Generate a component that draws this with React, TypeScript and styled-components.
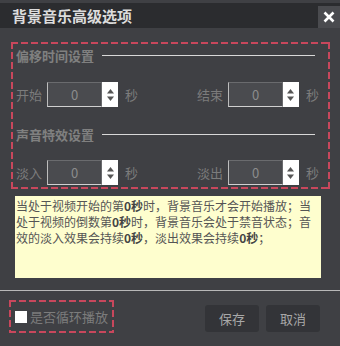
import React from 'react';
import styled, { createGlobalStyle } from 'styled-components';

const GlobalStyle = createGlobalStyle`
  html, body {
    margin: 0;
    padding: 0;
    background: #3f4044;
  }
  body {
    font-family: "Noto Sans CJK SC", "Noto Sans", sans-serif;
  }
`;

const Window = styled.div`
  width: 340px;
  height: 346px;
  background: #3f4044;
  display: flex;
  flex-direction: column;
  box-sizing: border-box;
  overflow: hidden;
`;

const TitleBar = styled.div`
  margin-top: 3px;
  height: 25px;
  background: #2b2c2f;
  display: flex;
  align-items: center;
  justify-content: space-between;
  padding-left: 12px;
`;

const Title = styled.div`
  color: #dcdcdc;
  font-size: 15px;
  font-weight: 700;
  line-height: 25px;
`;

const CloseButton = styled.button`
  width: 22px;
  height: 22px;
  margin-top: 3px;
  align-self: flex-start;
  padding: 0;
  border: none;
  background: #4a4b4f;
  display: flex;
  align-items: center;
  justify-content: center;
  cursor: pointer;
`;

// dashes 7px on / 3px off, like the reference's marker outline
const dash = '#c8475c';
const DashedBox = styled.div`
  box-sizing: border-box;
  background:
    repeating-linear-gradient(90deg, ${dash} 0 7px, transparent 7px 10px) top left / 100% 2px no-repeat,
    repeating-linear-gradient(90deg, ${dash} 0 7px, transparent 7px 10px) bottom left / 100% 2px no-repeat,
    repeating-linear-gradient(180deg, ${dash} 0 7px, transparent 7px 10px) top left / 2px 100% no-repeat,
    repeating-linear-gradient(180deg, ${dash} 0 7px, transparent 7px 10px) top right / 2px 100% no-repeat;
`;

const SettingsBox = styled(DashedBox)`
  margin: 14px 10px 0 11px;
  height: 147px;
  padding: 4px 11px 0 5px;
  display: flex;
  flex-direction: column;
`;

const SectionHeader = styled.div<{ $top: number }>`
  display: flex;
  align-items: center;
  height: 18px;
  margin-top: ${(p) => p.$top}px;
  padding-right: 4px;
  color: #808080;
  font-size: 13px;
  font-weight: 700;

  &::after {
    content: '';
    flex: 1;
    height: 1px;
    margin-left: 8px;
    background: #d8d8d8;
  }
`;

const Row = styled.div<{ $top: number }>`
  display: flex;
  justify-content: space-between;
  align-items: center;
  height: 25px;
  margin-top: ${(p) => p.$top}px;
`;

const Group = styled.div`
  display: flex;
  align-items: center;
`;

const Label = styled.span`
  width: 31px;
  color: #7c7c7c;
  font-size: 13px;
`;

const Unit = styled.span`
  margin-left: 7px;
  color: #7c7c7c;
  font-size: 13px;
`;

const Spin = styled.div`
  display: flex;
  height: 25px;
`;

const SpinInput = styled.div`
  width: 55px;
  box-sizing: border-box;
  border: 1px solid #6a6b6e;
  border-left-color: #bdbdbd;
  border-bottom-color: #d0d0d0;
  background: #4a4b4f;
  color: #8c8c8c;
  font-size: 13px;
  display: flex;
  align-items: center;
  justify-content: center;
`;

const SpinArrows = styled.div`
  width: 16px;
  background: #ffffff;
  display: flex;
  align-items: center;
  justify-content: center;
`;

const Note = styled.div`
  margin: 7px 0 0 15px;
  width: 306px;
  height: 82px;
  box-sizing: border-box;
  padding: 2px 0 0 1px;
  background: #fefece;
  color: #555555;
  font-size: 12px;
  line-height: 16px;

  b {
    font-weight: 700;
    color: #444;
  }
`;

const Divider = styled.div`
  margin-top: 12px;
  height: 1px;
  background: #b8b8b8;
`;

const Footer = styled.div`
  display: flex;
  justify-content: space-between;
  padding: 9px 20px 0 9px;
`;

const LoopBox = styled(DashedBox)`
  width: 105px;
  height: 33px;
  display: flex;
  align-items: center;
  padding-left: 6px;
  color: #7c7c7c;
  font-size: 13px;
`;

const Check = styled.span`
  width: 12px;
  height: 12px;
  background: #ffffff;
  margin-right: 3px;
`;

const Buttons = styled.div`
  display: flex;
  gap: 7px;
  margin-top: 5px;
`;

const Button = styled.button`
  width: 54px;
  height: 27px;
  border: none;
  border-radius: 3px;
  background: #333438;
  color: #a8a8a8;
  font-size: 13px;
  font-family: inherit;
  padding: 0;
`;

const Arrows = () => (
  <svg width="9" height="18" viewBox="0 0 9 18">
    <path d="M4.5 3 L8 7.5 H1 Z" fill="#555" />
    <path d="M1 10.5 H8 L4.5 15 Z" fill="#555" />
  </svg>
);

const SpinBox = () => (
  <Spin>
    <SpinInput>0</SpinInput>
    <SpinArrows>
      <Arrows />
    </SpinArrows>
  </Spin>
);

const Field = ({ label }: { label: string }) => (
  <Group>
    <Label>{label}</Label>
    <SpinBox />
    <Unit>秒</Unit>
  </Group>
);

export default function App() {
  return (
    <>
      <GlobalStyle />
      <Window>
        <TitleBar>
          <Title>背景音乐高级选项</Title>
          <CloseButton aria-label="关闭">
            <svg width="12" height="12" viewBox="0 0 12 12">
              <path d="M1.5 1.5 L10.5 10.5 M10.5 1.5 L1.5 10.5" stroke="#fff" strokeWidth="2.6" />
            </svg>
          </CloseButton>
        </TitleBar>
        <SettingsBox>
          <SectionHeader $top={0}>偏移时间设置</SectionHeader>
          <Row $top={18}>
            <Field label="开始" />
            <Field label="结束" />
          </Row>
          <SectionHeader $top={18}>声音特效设置</SectionHeader>
          <Row $top={17}>
            <Field label="淡入" />
            <Field label="淡出" />
          </Row>
        </SettingsBox>
        <Note>
          当处于视频开始的第<b>0秒</b>时，背景音乐才会开始播放；当处于视频的倒数第<b>0秒</b>时，背景音乐会处于禁音状态；音效的淡入效果会持续<b>0秒</b>，淡出效果会持续<b>0秒</b>；
        </Note>
        <Divider />
        <Footer>
          <LoopBox>
            <Check />
            是否循环播放
          </LoopBox>
          <Buttons>
            <Button>保存</Button>
            <Button>取消</Button>
          </Buttons>
        </Footer>
      </Window>
    </>
  );
}
